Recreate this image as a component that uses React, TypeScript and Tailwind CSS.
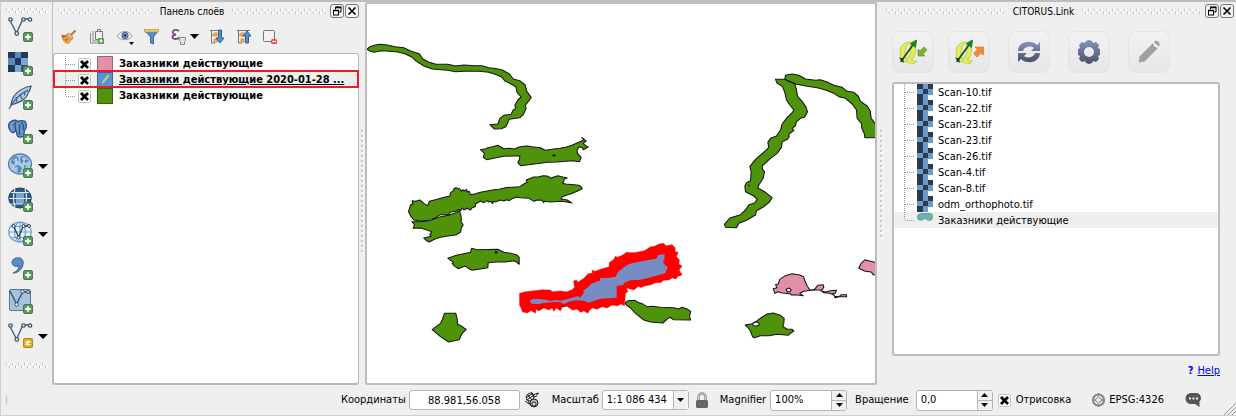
import { useState } from "react";
import type { ReactNode } from "react";

const GREEN = "#4f930b";
const PINK = "#e38fa8";

function Grip({ vertical = false, className = "" }: { vertical?: boolean; className?: string }) {
  if (vertical)
    return (
      <svg className={"w-[3px] shrink-0 " + className} aria-hidden="true">
        <defs>
          <pattern id="gripV" width="3" height="5" patternUnits="userSpaceOnUse">
            <rect x="1" y="1" width="2" height="2" fill="#fff" />
            <rect width="2" height="2" fill="#c6c6c6" />
          </pattern>
        </defs>
        <rect width="100%" height="100%" fill="url(#gripV)" />
      </svg>
    );
  return (
    <svg className={"h-[5px] min-w-0 shrink " + className} aria-hidden="true">
      <defs>
        <pattern id="gripH" width="6" height="5" patternUnits="userSpaceOnUse">
          <rect x="1" y="0" width="2" height="2" fill="#fff" />
          <rect x="0" y="0" width="1" height="2" fill="#bdbdbd" />
          <rect x="4" y="3" width="2" height="2" fill="#fff" />
          <rect x="3" y="3" width="1" height="2" fill="#bdbdbd" />
        </pattern>
      </defs>
      <rect width="100%" height="100%" fill="url(#gripH)" />
    </svg>
  );
}

function Plus() {
  return (
    <g>
      <rect x="15.5" y="15.500" width="9" height="9" rx="1.500" fill="#5b9a5a" stroke="#3f7f43" />
      <path d="M20 17.200v5.600M17.200 20h5.600" stroke="#fff" strokeWidth="1.800" />
    </g>
  );
}

function Nodes({ stroke = "#3f5a73" }: { stroke?: string }) {
  return (
    <g fill="#f0f0f0" stroke={stroke} strokeWidth="1.300">
      <path d="M2.500 4.500 8.500 16 15 2H22" fill="none" />
      <circle cx="2.500" cy="2.500" r="1.700" />
      <circle cx="8.800" cy="16.500" r="1.800" />
      <circle cx="15.500" cy="2.500" r="1.700" />
      <circle cx="22" cy="2.500" r="1.700" />
    </g>
  );
}

function Globe({ fill, line }: { fill: string; line: string }) {
  return (
    <g fill="none" stroke={line} strokeWidth="1.200">
      <ellipse cx="12" cy="11" rx="11.300" ry="10" fill={fill} />
      <ellipse cx="12" cy="11" rx="5.500" ry="10" />
      <path d="M1 11h22M12 1v20M3 5.500h18M3 16.500h18" />
    </g>
  );
}

const sideTools: { label: string; menu?: boolean; art: ReactNode }[] = [
  { label: "Добавить векторный слой", art: <><Nodes /><Plus /></> },
  {
    label: "Добавить растровый слой",
    art: (
      <>
        <rect y="1" width="20" height="20" fill="#5d88bd" />
        <path d="M0 1h7v6H0zM13 1h7v6h-7zM7 7h6v7H7zM0 14h7v7H0z" fill="#203a5c" />
        <path d="M13 7h7v7h-7zM7 14h6v7H7z" fill="#7fa5d4" />
        <path d="M13 14h7v7h-7z" fill="#33547d" />
        <Plus />
      </>
    ),
  },
  {
    label: "Добавить слой SpatiaLite",
    art: (
      <>
        <path d="M23 1C13 3 4 9 3 20 9 18 19 15 20 8 22 6 22.500 3 23 1z" fill="#b4cae2" stroke="#34597f" strokeWidth="1.200" />
        <path d="M20 5C11 10 5 15 1 24M8 12l1 5M12 9l2 5M16 6.500l1 4" fill="none" stroke="#34597f" strokeWidth="1.100" />
        <Plus />
      </>
    ),
  },
  {
    label: "Добавить слой PostGIS",
    menu: true,
    art: (
      <>
        <path d="M4 2C1 3 0 6 1 9c1 3 3 5 4.500 4.500C6.500 12.500 7 12 8 12c1 1 .500 4 1.500 5 1.500 1.500 5 1.500 6-.5 1-2 0-4 1.500-6 2-2 1.500-6 0-8-2-1-5-1-7 0C8 1 6 1 4 2z" fill="#6a99cc" stroke="#2f5480" strokeWidth="1.400" />
        <path d="M8 3c-2 3-1 6 0 9M13 3c3 3 3 5 2 8M5 6h1M11.500 5v11" fill="none" stroke="#2f5480" strokeWidth="1.400" />
        <Plus />
      </>
    ),
  },
  {
    label: "Добавить слой WMS",
    menu: true,
    art: (
      <>
        <ellipse cx="12" cy="11" rx="11.500" ry="10" fill="#a9cbe8" stroke="#4b80b8" strokeWidth="1.300" />
        <path d="M4 5l4-2 3 2-1 3-3 1-1 3-3-2zM13 3l5 1 3 4-3 2-3-1-2 2-1-4zM7 13l4-1 3 3-2 5-3-1zM16 12l4 1-1 4-3-1z" fill="#5c88b4" />
        <path d="M5 7h4M8 5v5M14 6h5M16 4v6M9 14v4M17 14h3" stroke="#d8e9f5" />
        <Plus />
      </>
    ),
  },
  {
    label: "Добавить слой WCS",
    art: (
      <>
        <ellipse cx="12" cy="11" rx="11.300" ry="10" fill="#2f5580" stroke="#1f3f66" />
        <path d="M8 6h8v5H8zM8 12h8v5H8z" fill="#7ba4d4" />
        <path d="M1 11.500h22M3 5.500h18M3 17h18M7 2c-2 6-2 12 0 18M17 2c2 6 2 12 0 18" fill="none" stroke="#dbe7f3" strokeWidth="1.200" />
        <Plus />
      </>
    ),
  },
  {
    label: "Добавить слой WFS",
    menu: true,
    art: (
      <>
        <Globe fill="#e6f1fa" line="#6f9fd0" />
        <path d="M6 6l4.500 10L15.500 5H21" fill="none" stroke="#2a3d50" strokeWidth="1.300" />
        <g fill="#fff" stroke="#2a3d50">
          <circle cx="5.500" cy="5" r="1.500" />
          <circle cx="10.500" cy="16.500" r="1.500" />
          <circle cx="15.500" cy="5" r="1.500" />
          <circle cx="21" cy="5" r="1.500" />
        </g>
        <Plus />
      </>
    ),
  },
  {
    label: "Добавить слой из текста с разделителями",
    art: (
      <>
        <path d="M9 3c4-1 7 2 6 6.500-1 5-5 8.500-10 8.500 4-2 6-4 6-7-4 1-7-.5-7-3.500 0-2.500 2-4.500 5-4.500z" fill="#5a8dc4" stroke="#33608f" />
        <Plus />
      </>
    ),
  },
  {
    label: "Создать слой",
    art: (
      <>
        <rect x="1.500" y="0.500" width="21" height="21" rx="1.500" fill="#a9c3de" stroke="#5d7893" />
        <path d="M2 2l6.500 13L15 2.500 22 4" fill="none" stroke="#33536f" strokeWidth="1.400" />
        <g fill="#e8eff6" stroke="#33536f">
          <circle cx="8.700" cy="15.500" r="1.800" />
          <circle cx="14.500" cy="2.500" r="1.700" />
          <circle cx="20" cy="3" r="1.500" />
        </g>
        <Plus />
      </>
    ),
  },
  {
    label: "Новый временный слой",
    menu: true,
    art: (
      <>
        <Nodes />
        <rect x="15.500" y="15.500" width="9" height="9" rx="1" fill="#d9a90c" stroke="#b48a08" />
        <path d="M20 17v6M17.200 18.500l5.600 3M22.800 18.500l-5.600 3" stroke="#fff" strokeWidth="1.300" />
      </>
    ),
  },
];

const layerTools: { label: string; width: string; art: ReactNode }[] = [
  {
    label: "Стиль",
    width: "w-[28px]",
    art: (
      <>
        <path d="M1 8l5-1 5 4-3 4c-3 1-6-1-7-7z" fill="#f0a93c" stroke="#c77a22" strokeWidth=".7" />
        <path d="M0 7l4 0 1 2-3 1zM3 12l4-2-1 3z" fill="#e34d35" />
        <path d="M5 7l3-2 4 4-1 3z" fill="#e8b98a" stroke="#a5783a" strokeWidth=".7" />
        <path d="M10 7l4.500-4.500" stroke="#c9803a" strokeWidth="2.400" />
      </>
    ),
  },
  {
    label: "Добавить группу",
    width: "w-[28px]",
    art: (
      <>
        <path d="M1.500 5v10H9M4 3v10h6" fill="none" stroke="#8a8a8a" />
        <path d="M6.500 3.500V11.500H13.500V3.500zM8.500 3.500V1.500h3v2" fill="#f4f4f4" stroke="#777" />
        <rect x="9" y="10" width="6" height="6" rx="1" fill="#4f9a54" />
        <path d="M12 11v4M10 13h4" stroke="#fff" />
      </>
    ),
  },
  {
    label: "Видимость слоёв",
    width: "w-[27px]",
    art: (
      <>
        <path d="M0 8c4-6 12-6 15 0-3 5-11 5-15 0z" fill="#f7f7f7" stroke="#999" />
        <circle cx="8" cy="7.500" r="3.200" fill="#6d93bd" stroke="#3f648e" />
        <circle cx="8" cy="7.500" r="1.200" fill="#1f3147" />
        <path d="M12 14h5l-2.500 3z" fill="#000" />
      </>
    ),
  },
  {
    label: "Фильтр",
    width: "w-[27px]",
    art: (
      <>
        <path d="M1 3h13L9.500 9v7l-3-1V9z" fill="#5c8fc9" stroke="#3d6da5" />
        <rect x=".5" y="1.500" width="14" height="2.500" fill="#f2cf52" stroke="#9a8a4a" strokeWidth=".6" />
      </>
    ),
  },
];

function LayerIcon({ children, w = 18 }: { children: ReactNode; w?: number }) {
  return (
    <svg width={w} height="17" viewBox={`0 0 ${w} 17`} aria-hidden="true">
      {children}
    </svg>
  );
}

function DockButtons() {
  return (
    <div className="flex shrink-0 gap-px">
      <button type="button" aria-label="Открепить" className="flex size-[14px] items-center justify-center rounded-[3px] border border-[#777] bg-[#f4f4f4]">
        <svg width="10" height="10" viewBox="0 0 10 10" fill="none" stroke="#000">
          <path d="M3.500 3.500V1h5.500v5H6.500" />
          <path d="M3 1.500h6.500M1 4.500h5.500" strokeWidth="1.600" />
          <rect x="1.500" y="4.500" width="5" height="4.500" />
        </svg>
      </button>
      <button type="button" aria-label="Закрыть" className="flex size-[14px] items-center justify-center rounded-[3px] border border-[#777] bg-[#f4f4f4]">
        <svg width="10" height="10" viewBox="0 0 10 10" stroke="#000" strokeWidth="1.600">
          <path d="M1.500 1.500l7 7M8.500 1.500l-7 7" />
        </svg>
      </button>
    </div>
  );
}

function DockTitle({ children }: { children: string }) {
  return (
    <div className="flex h-[18px] items-center">
      <Grip className="flex-1" />
      <h2 className="px-2 pt-px text-[10px] leading-[14px] whitespace-nowrap">{children}</h2>
      <Grip className="mr-1 flex-1" />
      <DockButtons />
    </div>
  );
}

function Check({ id }: { id: string }) {
  const [on, setOn] = useState(true);
  return (
    <span className="relative flex size-[13px] shrink-0">
      <input
        id={id}
        type="checkbox"
        checked={on}
        onChange={() => setOn(!on)}
        className="size-[13px] appearance-none rounded-[2px] border border-[#c4c4c4] bg-white"
      />
      {on && (
        <svg className="pointer-events-none absolute inset-0" width="13" height="13" viewBox="0 0 13 13" stroke="#000" strokeWidth="2.800">
          <path d="M3 3l7 7M10 3l-7 7" />
        </svg>
      )}
    </span>
  );
}

function TreeLine({ last = false }: { last?: boolean }) {
  return (
    <svg width="11" height="16" viewBox="0 0 11 16" className="shrink-0" aria-hidden="true" stroke="#999" strokeDasharray="1 1">
      <path d={last ? "M.5 0V8" : "M.5 0V16"} />
      <path d="M1 8.500H11" />
    </svg>
  );
}

const layers = [
  { name: "Заказники действующие", fill: "bg-[#e38fa8]" },
  { name: "Заказники действующие 2020-01-28 ...", fill: "bg-[#5c8fdc]", active: true },
  { name: "Заказники действующие", fill: "bg-[#4f930b]" },
];

const files = [
  "Scan-10.tif",
  "Scan-22.tif",
  "Scan-23.tif",
  "Scan-23.tif",
  "Scan-26.tif",
  "Scan-4.tif",
  "Scan-8.tif",
  "odm_orthophoto.tif",
];

function RasterIcon() {
  return (
    <svg width="16" height="16" viewBox="0 0 16 16" className="shrink-0" aria-hidden="true">
      <rect width="16" height="16" fill="#6f99c9" />
      <path d="M0 0h6v5H0zM11 0h5v5h-5zM6 5h5v5H6zM0 10h6v6H0z" fill="#2b3b4e" />
      <path d="M11 11h5v5h-5z" fill="#fff" />
    </svg>
  );
}

function MapCanvas() {
  return (
    <svg viewBox="366 4 509 379" preserveAspectRatio="xMidYMid slice" className="block h-full w-full" role="img" aria-label="Карта">
      <g fill={GREEN} stroke="#151515" strokeWidth="3.200" strokeLinejoin="round">
        <g transform="translate(360 0) scale(.333333)">
          <path d="M19 148 28 140 42 136 58 133 80 135 104 140 130 143 150 153 176 161 186 176 204 186 226 193 262 193 285 198 310 195 345 197 364 197 385 203 400 205 424 209 447 222 458 237 478 242 494 255 499 274 512 292 503 305 494 316 497 325 488 344 478 353 446 358 441 370 436 380 422 386 402 387 388 374 412 372 418 355 430 346 452 343 458 330 466 325 463 316 472 300 482 291 470 278 466 260 448 250 433 243 425 232 408 224 385 217 355 214 310 214 285 215 262 211 215 207 190 198 168 184 155 172 135 162 112 156 88 154 64 152 40 157 28 153z" />
          <path d="M360 449 376 446 382 443 396 440 412 436 430 446 446 445 462 447 476 441 490 439 502 438 515 440 540 443 554 451 580 447 598 445 615 442 634 436 648 430 662 424 670 420 664 413 677 423 668 430 675 437 683 441 668 449 665 442 655 441 649 452 652 462 662 472 657 485 635 482 590 486 562 487 540 490 480 497 472 488 477 477 478 467 455 468 430 469 400 475 378 479 368 472 372 460z" />
          <path d="M577 465h7v2h-7z" fill="#183200" />
        </g>
        <g transform="translate(360 120) scale(.333333)">
          <path d="M144 275 150 255 157 251 155 242 165 244 178 240 190 250 201 257 207 244 230 238 252 232 268 228 270 218 280 211 280 206 286 203 298 207 303 214 307 209 311 213 318 208 320 216 326 214 330 224 345 221 360 217 400 209 416 208 435 203 478 200 490 192 500 187 497 180 520 171 535 170 548 167 560 168 572 175 580 171 592 167 607 171 620 174 610 178 610 184 606 190 616 192 640 194 655 196 662 200 665 206 650 214 630 222 617 226 605 231 602 237 620 240 634 249 615 245 600 244 570 246 551 244 550 248 545 241 530 240 520 244 505 235 480 233 468 231 455 236 446 242 440 239 430 243 420 240 405 246 398 244 397 251 390 244 385 246 380 242 370 248 360 243 345 252 344 260 335 263 330 270 320 265 310 270 306 264 300 272 296 268 285 274 270 276 265 284 240 284 225 293 215 298 205 301 180 303 160 300 152 290z" />
          <path d="M154 305 180 305 205 302 212 300 240 290 265 286 285 278 297 272 302 290 302 305 308 315 302 325 300 337 285 345 262 348 240 352 225 356 206 366 198 362 190 354 212 349 208 343 214 335 200 330 180 324 158 325 162 314z" />
          <path d="M204 297l9 1-4 5z" fill="#fff" strokeWidth="2" />
          <path d="M262 415 290 405 310 401 330 397 333 385 350 389 412 388 430 397 450 400 470 405 476 412 476 433 468 426 460 422 435 426 408 426 383 428 382 443 355 448 335 451 325 446 314 438 293 446 283 439 275 430 279 427z" />
          <circle cx="407" cy="397" r="3" fill="#315d08" />
          <path d="M252 580 286 580 290 598 291 612 302 618 317 628 305 640 296 659 264 666 240 650 215 629 240 610 245 600z" />
        </g>
        <g transform="translate(500 230) scale(.333333)">
          <path d="M374 218 382 212 404 211 412 217 425 221 440 230 455 229 480 232 520 233 534 237 545 232 562 238 571 245 567 257 570 270 520 269 508 262 500 267 487 279 450 276 430 270 405 250 390 234 378 226z" />
        </g>
        <g transform="translate(690 60) scale(.333333)">
          <path d="M255 58 283 58 300 67 313 72 318 90 321 108 335 125 346 140 351 156 342 172 330 175 318 185 314 198 305 205 310 212 295 222 296 230 291 238 275 245 273 262 260 280 240 295 215 318 216 328 222 335 218 355 205 375 202 384 225 397 245 413 235 428 220 440 198 452 195 465 165 482 145 490 138 503 105 502 102 493 118 474 150 464 165 450 175 434 192 429 200 418 190 408 165 395 163 378 168 368 180 362 182 335 178 320 195 298 225 272 235 262 232 247 240 235 258 228 270 210 275 192 290 172 305 158 310 150 298 135 288 120 283 98 276 80 260 70z" />
          <path d="M283 58 285 46 305 42 325 46 345 57 375 61 390 59 410 66 430 76 455 82 470 94 490 97 503 108 510 124 530 138 539 152 542 175 555 192 560 233 523 233 522 222 514 205 513 190 500 175 498 150 485 132 465 115 445 110 430 100 405 90 380 83 350 79 318 73 300 65z" />
          <circle cx="175" cy="376" r="1" />
        </g>
        <g transform="translate(740 230) scale(.333333)">
          <path d="M14 285 35 281 50 272 65 261 80 252 98 249 120 256 131 265 130 280 127 290 140 297 155 298 160 303 150 310 143 316 110 313 85 317 60 317 42 323 36 320 30 303 22 292z" />
          <path d="M36 281 44 276 55 278 56 284 48 288 38 287z" fill="#fff" />
          <g fill={PINK}>
            <path d="M98 176 110 173 105 164 113 162 118 148 135 137 155 131 178 135 190 141 192 150 200 168 209 181 190 184 178 190 188 197 165 194 152 195 150 191 125 189 112 185 103 190z" />
            <path d="M137 178l8-4 7 5-3 6-9 0z" fill="#fff" />
            <path d="M209 181 222 178 232 166 248 164 250 172 244 180 228 180z" />
            <path d="M240 182 256 186 270 182 288 181 284 190 276 191 284 199 296 200 302 194 318 194 318 200 296 200 284 203 280 195 268 190 250 188z" />
            <path d="M355 115 362 100 374 89 384 92 405 97 410 97 410 134 398 134 392 126 374 124z" />
          </g>
        </g>
      </g>
      <g transform="translate(500 230) scale(.333333)">
        <path d="M57 190 75 185 100 182 125 179 150 180 155 185 180 183 198 185 215 179 222 172 219 153 228 150 232 157 250 145 262 132 276 128 274 120 284 124 300 118 326 110 326 98 340 88 345 78 350 82 365 76 378 67 400 68 432 62 450 50 462 49 475 42 490 40 496 47 515 44 524 53 524 65 533 66 528 80 537 90 535 102 545 108 536 120 545 135 530 140 528 147 515 144 505 150 490 151 480 158 465 158 450 165 435 167 420 173 414 169 400 180 378 174 382 185 375 190 372 228 362 222 350 228 335 225 320 234 305 230 290 238 275 234 268 240 262 250 250 243 240 247 230 238 215 240 198 228 185 232 180 243 168 234 160 244 155 234 145 240 130 234 115 243 107 238 105 250 92 242 80 249 66 246 62 235 57 225z" fill="#f00" stroke="#f00" strokeLinejoin="bevel" />
        <path d="M88 211 100 206 120 207 135 209 150 213 165 210 180 212 200 208 215 203 232 198 238 203 240 200 250 190 248 182 262 172 275 160 298 152 300 143 320 144 345 140 353 125 370 112 385 103 400 98 440 91 468 86 472 76 492 72 492 88 488 94 492 104 502 112 494 130 465 138 440 145 415 150 392 150 372 158 368 165 348 168 349 203 300 206 265 218 250 212 225 211 205 215 190 222 180 216 150 217 135 218 115 222 92 221z" fill="#778bc5" />
        <path d="M122 231h10M149 230h12M180 229h18" stroke="#102000" strokeWidth="2" />
      </g>
    </svg>
  );
}

function Tool({ label, className, disabled, children }: { label: string; className: string; disabled?: boolean; children: ReactNode }) {
  return (
    <button
      type="button"
      aria-label={label}
      disabled={disabled}
      className={"flex size-[42px] items-center justify-center rounded-lg border border-[#e4e4e4] bg-gradient-to-b from-[#f2f2f2] to-[#e6e6e6] " + className}
    >
      <svg width="30" height="26" viewBox="0 0 30 26" aria-hidden="true">
        <defs>
          <linearGradient id="steel" x1="0" y1="0" x2="0" y2="1">
            <stop offset="0" stopColor="#8394bd" />
            <stop offset="1" stopColor="#4a5166" />
          </linearGradient>
        </defs>
        {children}
      </svg>
    </button>
  );
}

function QMark() {
  return (
    <g>
      <path d="M11 3C5.500 3 2 8 2 14c0 5 2.500 9 6.500 9 5 0 9-5.500 9-12C17.500 6 15 3 11 3zM10.500 5.500c2 0 2.800 2 2.300 6-.5 4.500-2.300 8.500-4 8.500-1.800 0-2.300-3-1.800-7 .5-4 1.800-7.500 3.500-7.500z" fill="#e0ee58" stroke="#b4c24a" strokeWidth=".8" fillRule="evenodd" />
      <path d="M9 18c4 0 4 4 9.500 4-2 4-8 3.500-9.500 0z" fill="#e0ee58" stroke="#b4c24a" strokeWidth=".7" />
      <path d="M4.500 20.500L15.500 5" stroke="#174f1e" strokeWidth="1.800" />
      <path d="M18.500 1l-1 7.500-5-4z" fill="#0f8a2a" stroke="#126b22" strokeWidth=".8" />
      <path d="M1 18.500l4 1 1 4.500-2-1.500-1.500 1v-3z" fill="#17381b" />
    </g>
  );
}

function Spin({ id, value, className }: { id: string; value: string; className: string }) {
  return (
    <div className={"flex h-[21px] overflow-hidden rounded-[3px] border border-[#b4b4b4] bg-white " + className}>
      <input id={id} defaultValue={value} className="w-0 min-w-0 flex-1 bg-transparent px-1 outline-none" />
      <div className="flex w-[15px] flex-col border-l border-[#b4b4b4] bg-[#f1f1f1]">
        <button type="button" aria-label="Увеличить" className="flex flex-1 items-center justify-center border-b border-[#b4b4b4]">
          <svg width="7" height="4" viewBox="0 0 7 4"><path d="M0 4h7L3.500 0z" /></svg>
        </button>
        <button type="button" aria-label="Уменьшить" className="flex flex-1 items-center justify-center">
          <svg width="7" height="4" viewBox="0 0 7 4"><path d="M0 0h7L3.500 4z" /></svg>
        </button>
      </div>
    </div>
  );
}

export default function App() {
  return (
    <div className="flex min-h-screen flex-col border-t-2 border-b border-l border-t-[#bdbdbd] border-b-[#d0d0d0] border-l-[#cfcfcf] bg-[#efefef] font-['DejaVu_Sans_Condensed','Noto_Sans',sans-serif] text-[11px] leading-4 text-black">
      <main className="flex flex-1">
        <nav aria-label="Слои" className="flex w-[52px] shrink-0 flex-col border-r border-[#bdbdbd] pt-[6px] pl-[5px]">
          <Grip className="w-[42px]" />
          <div className="flex flex-col">
            {sideTools.map((t) => (
              <div key={t.label} className="flex h-[34px] items-center">
                <button type="button" aria-label={t.label} className="ml-[2px] flex size-[26px] items-center justify-center">
                  <svg width="26" height="26" viewBox="0 0 26 26">{t.art}</svg>
                </button>
                {t.menu && (
                  <button type="button" aria-label={t.label + ": меню"} className="ml-1 flex h-6 items-center">
                    <svg width="10" height="5" viewBox="0 0 10 5"><path d="M0 0h10L5 5z" /></svg>
                  </button>
                )}
              </div>
            ))}
          </div>
          <Grip className="mt-[10px] w-[42px]" />
        </nav>

        <section className="flex w-[306px] shrink-0 flex-col">
          <div className="pl-[5px]">
            <DockTitle>Панель слоёв</DockTitle>
          </div>
          <div className="flex h-[33px] items-center pl-2">
            {layerTools.map((t) => (
              <button key={t.label} type="button" aria-label={t.label} className={t.width}>
                <LayerIcon>{t.art}</LayerIcon>
              </button>
            ))}
            <button type="button" aria-label="Фильтр по выражению" className="flex w-[38px] items-center gap-px">
              <LayerIcon>
                <path d="M8 3C5 1 1 2 2 5c.3 1 2 1.500 3 1.500C2 7 1 8 1.500 9.500c1 2 5 2 7 0" fill="none" stroke="#7a4a86" strokeWidth="1.800" />
                <path d="M8.500 9.500h6v3l-1 1v3h-4v-3l-1-1z" fill="#e2e2e2" stroke="#888" />
              </LayerIcon>
              <svg width="9" height="5" viewBox="0 0 9 5"><path d="M0 0h9L4.500 5z" /></svg>
            </button>
            <button type="button" aria-label="Развернуть всё" className="w-[27px]">
              <LayerIcon>
                <path d="M2.500 2v13H6M2.500 7H6M1 2.500h8" fill="none" stroke="#777" />
                <path d="M5 5h3v3H5zM5 11h3v3H5z" fill="#f6c36e" stroke="#d58a2b" />
                <path d="M9.500 2h3v8H15l-4 5-4-5h2.500z" fill="#5a8fcb" stroke="#2c5d97" />
              </LayerIcon>
            </button>
            <button type="button" aria-label="Свернуть всё" className="w-[26px]">
              <LayerIcon>
                <path d="M2.500 2v13H6M2.500 7H6M1 2.500h13" fill="none" stroke="#777" />
                <path d="M5 5h3v3H5zM5 11h3v3H5z" fill="#f6c36e" stroke="#d58a2b" />
                <path d="M9.500 15h3V8H15l-4-5-4 5h2.500z" fill="#5a8fcb" stroke="#2c5d97" />
              </LayerIcon>
            </button>
            <button type="button" aria-label="Удалить слой">
              <LayerIcon>
                <rect x="1.500" y="2.500" width="11" height="11" rx="1" fill="#f1f1f1" stroke="#777" />
                <rect x="9" y="11" width="6" height="5" rx="1.500" fill="#e55353" />
                <path d="M10 13.500h4" stroke="#fff" strokeWidth="1.200" />
              </LayerIcon>
            </button>
          </div>
          <ul className="flex-1 rounded-[3px] border border-b-2 border-[#b8b8b8] bg-white pt-[2px]">
            {layers.map((l, i) => (
              <li key={i} className={"relative flex h-4 items-center pl-[11px] " + (l.active ? "bg-[#efefef]" : "")}>
                <TreeLine last={i === 2} />
                <span className="ml-[2px] flex"><Check id={"layer" + i} /></span>
                <span className={"ml-[6px] flex size-4 shrink-0 items-center justify-center border border-black/30 " + l.fill}>
                  {l.active && (
                    <svg width="12" height="14" viewBox="0 0 12 14"><path d="M2 12l1-4 6-7 2 2-6 7z" fill="#b5cf9a" stroke="#6f8f72" strokeWidth=".8" /></svg>
                  )}
                </span>
                <label htmlFor={"layer" + i} className={"ml-[6px] font-bold whitespace-nowrap " + (l.active ? "underline" : "")}>
                  {l.name}
                </label>
                {l.active && <span className="pointer-events-none absolute -inset-x-px -top-[2px] bottom-0 border-2 border-[#ed1c24]" />}
              </li>
            ))}
          </ul>
        </section>

        <div className="flex w-[6px] shrink-0 items-start justify-center pt-32">
          <Grip vertical className="h-[124px]" />
        </div>

        <div className="min-w-0 flex-1 rounded-[2px] border-2 border-[#bdbdbd] bg-white">
          <MapCanvas />
        </div>

        <div className="flex w-[8px] shrink-0 items-start justify-center pt-32">
          <Grip vertical className="h-[109px]" />
        </div>

        <section className="flex w-[351px] shrink-0 flex-col pr-[2px] pl-[1px]">
          <DockTitle>CITORUS.Link</DockTitle>
          <div className="flex pt-[11px] pl-[6px]">
            <Tool label="Загрузить" className="">
              <QMark />
              <path d="M20 17v-7l2 2 4-4 3 3-4 4 2 2z" fill="#7fae35" stroke="#62912a" strokeWidth=".6" />
            </Tool>
            <Tool label="Выгрузить" className="ml-[14px]">
              <QMark />
              <path d="M29.500 8v8l-2.500-2-4 4-3.500-3.500 4-4L21 8z" fill="#f08a36" stroke="#d7701d" strokeWidth=".6" />
            </Tool>
            <Tool label="Обновить" className="ml-[18px]">
              <path d="M4 12C4 6 10 2 16 3c3 0 5 1 7 3l3-3v9h-9l3-3c-4-3-10-1-11 3zM26 14c0 6-6 10-12 9-3 0-5-1-7-3l-3 3v-9h9l-3 3c4 3 10 1 11-3z" fill="url(#steel)" />
            </Tool>
            <Tool label="Настройки" className="ml-[18px]">
              <path d="M12 2l3-1 3 1 1 2 3-1 3 3-1 3 2 1v6l-2 1 1 3-3 3-3-1-1 2-3 1-3-1-1-2-3 1-3-3 1-3-2-1v-6l2-1-1-3 3-3 3 1zM15 8a5 5 0 1 0 0 10 5 5 0 0 0 0-10z" fill="url(#steel)" fillRule="evenodd" />
            </Tool>
            <Tool label="Править" className="ml-[18px]" disabled>
              <path d="M5.500 17.500L18.500 4.500l5 5-13 13-5.500 1zM20 3q2-2.500 4.500 0t0 4.500z" fill="#a0a0a0" />
              <circle cx="21.500" cy="6.500" r="1.600" fill="#f0f0f0" />
            </Tool>
          </div>
          <ul className="mt-[9px] mr-[14px] ml-[6px] min-h-[272px] flex-1 rounded-[3px] border-2 border-[#bdbdbd] bg-white">
            {files.map((f, i) => (
              <li key={i} className="flex h-4 items-center pl-[10px]">
                <TreeLine />
                <span className="ml-[2px] flex"><RasterIcon /></span>
                <span className="pt-[2px] pl-[5px]">{f}</span>
              </li>
            ))}
            <li className="flex h-4 items-center bg-[#efefef] pl-[10px]">
              <TreeLine last />
              <svg width="16" height="16" viewBox="0 0 16 16" className="ml-[2px] shrink-0" aria-hidden="true">
                <path d="M1 3C2 1.500 4 1.500 8 1.500s6-.5 7 1c1 2 .5 5-1 5.500-2 .5-3 .5-4-.5C9 6.500 7 6.500 6 7.500 5 8.500 2 8.500 1 7 .4 6 .4 4.500 1 3z" fill="#6db3ad" stroke="#5b8a8c" strokeWidth=".8" />
              </svg>
              <span className="pt-[2px] pl-[5px]">Заказники действующие</span>
            </li>
          </ul>
          <div className="mr-[14px] flex h-[29px] items-center justify-end gap-1 text-[#0000f5]">
            <b>?</b>
            <a href="#help" className="underline">Help</a>
          </div>
        </section>
      </main>

      <footer className="relative flex h-[30px] shrink-0 items-center justify-end pr-[34px]">
        <span className="mr-auto ml-[5px] h-2 w-px bg-[#f2b85a]" />
        <label htmlFor="coords" className="pr-[3px]">Координаты</label>
        <input id="coords" defaultValue="88.981,56.058" className="h-5 w-[111px] rounded-[3px] border border-[#b4b4b4] bg-white text-center outline-none" />
        <button type="button" aria-label="Переключить экстент" className="ml-1">
          <svg width="16" height="16" viewBox="0 0 16 16" fill="none" stroke="#222">
            <ellipse cx="6" cy="5" rx="4" ry="3.500" transform="rotate(-40 6 5)" />
            <path d="M2 6l7-5M3 8l7-5M7 0l3 6M4 3l4 5M1 9l4 3M4 9l3 5M9 3l5-2M10 5l3-1M12 3l3-2" />
            <circle cx="10" cy="11" r="4" fill="#b7b7b7" />
            <circle cx="10" cy="12" r="2" fill="#eee" />
          </svg>
        </button>
        <label htmlFor="scale" className="ml-3 pr-[3px]">Масштаб</label>
        <div className="relative flex h-5 w-[87px]">
          <select id="scale" className="w-full appearance-none rounded-[3px] border border-[#b4b4b4] bg-white pl-1 outline-none">
            <option>1:1 086 434</option>
          </select>
          <span className="pointer-events-none absolute inset-y-px right-px flex w-[15px] items-center justify-center border-l border-[#b4b4b4] bg-[#f1f1f1]">
            <svg width="7" height="4" viewBox="0 0 7 4"><path d="M0 0h7L3.500 4z" /></svg>
          </span>
        </div>
        <button type="button" aria-label="Закрепить масштаб" className="ml-[7px]">
          <svg width="12" height="17" viewBox="0 0 12 17">
            <path d="M2.500 9V5a3.500 3.500 0 0 1 7 0v4" fill="none" stroke="#8a8a8a" strokeWidth="2.400" />
            <path d="M2.500 9V5a3.500 3.500 0 0 1 7 0v4" fill="none" stroke="#ddd" strokeWidth=".8" />
            <rect y="8" width="12" height="8" rx="1.500" fill="#666" />
          </svg>
        </button>
        <label htmlFor="magnifier" className="ml-3 pr-1">Magnifier</label>
        <Spin id="magnifier" value="100%" className="w-[77px]" />
        <label htmlFor="rotation" className="ml-2 pr-[7px]">Вращение</label>
        <Spin id="rotation" value="0,0" className="w-[77px]" />
        <span className="ml-[5px] flex"><Check id="render" /></span>
        <label htmlFor="render" className="pl-[5px]">Отрисовка</label>
        <button type="button" className="ml-5 flex items-center gap-[3px]">
          <svg width="15" height="16" viewBox="0 0 15 16" fill="none" stroke="#777">
            <circle cx="7.500" cy="8" r="5.500" strokeWidth="2.200" stroke="#8a8a8a" />
            <path d="M7.500 1v3M7.500 12v3M1 8h3M11 8h3M7.500 5L11 8l-3.500 3L4 8z" />
          </svg>
          EPSG:4326
        </button>
        <button type="button" aria-label="Сообщения" className="ml-[21px]">
          <svg width="17" height="16" viewBox="0 0 17 16">
            <path d="M6 1h5a5 5 0 0 1 3.500 8.500V15L10 12H6A5.500 5.500 0 0 1 6 1z" fill="#555" />
            <path d="M4 5.500h2v2H4zM7.500 5.500h2v2h-2zM11 5.500h2v2h-2z" fill="#eee" />
          </svg>
        </button>
        <svg width="12" height="12" viewBox="0 0 12 12" className="absolute right-0 bottom-0" stroke="#999" aria-hidden="true">
          <path d="M0 12L12 0M4 12l8-8M8 12l4-4" />
        </svg>
      </footer>
    </div>
  );
}
